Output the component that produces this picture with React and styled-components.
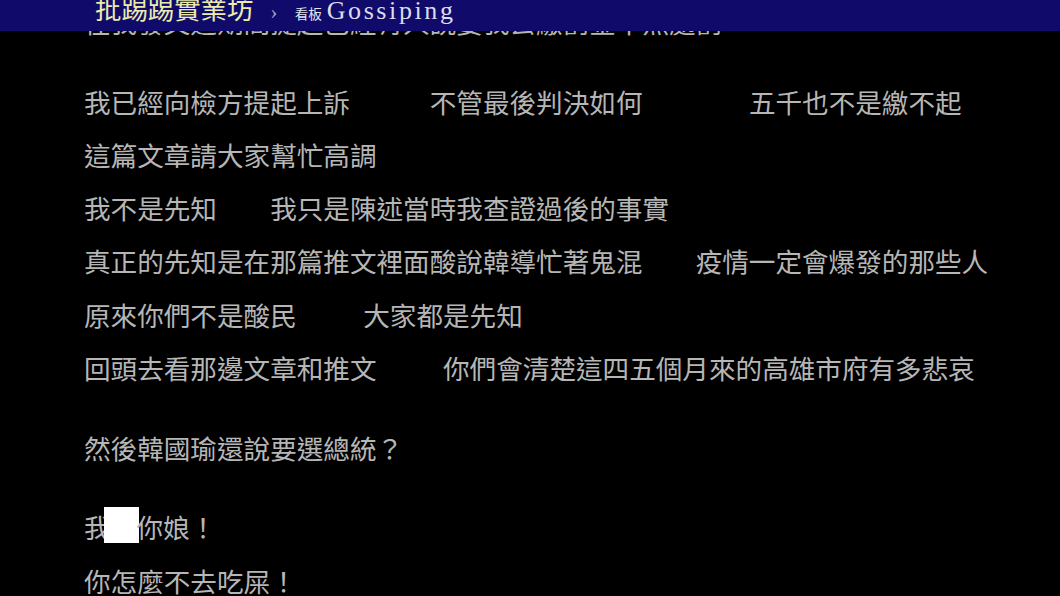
import styled, { createGlobalStyle } from 'styled-components';

const GlobalStyle = createGlobalStyle`
    html, body {
        margin: 0;
        padding: 0;
        background: #000000;
        overflow: hidden;
    }
    * {
        box-sizing: border-box;
    }
`;

// each line is a list of segments: strings are text, numbers are half-width spaces
const before = [
    ['在我發文這期間提起已經有人說要我去繳罰金不然處罰'],
    null,
    ['我已經向檢方提起上訴', 6, '不管最後判決如何', 8, '五千也不是繳不起'],
    ['這篇文章請大家幫忙高調'],
    ['我不是先知', 4, '我只是陳述當時我查證過後的事實'],
    ['真正的先知是在那篇推文裡面酸說韓導忙著鬼混', 4, '疫情一定會爆發的那些人'],
    ['原來你們不是酸民', 5, '大家都是先知'],
    ['回頭去看那邊文章和推文', 5, '你們會清楚這四五個月來的高雄市府有多悲哀'],
    null,
    ['然後韓國瑜還說要選總統？'],
    null,
];

function Segments({ parts }) {
    return parts.map((p, i) =>
        typeof p === 'number' ? <Space key={i} n={p} /> : <span key={i}>{p}</span>
    );
}

export default function App() {
    return (
        <Page>
            <GlobalStyle />
            <Topbar>
                <Logo>批踢踢實業坊</Logo>
                <Chevron>›</Chevron>
                <BoardLabel>看板</BoardLabel>
                <BoardName>Gossiping</BoardName>
            </Topbar>
            <Article>
                {before.map((line, i) =>
                    line === null ? <Blank key={i} /> : (
                        <Line key={i}>
                            <Segments parts={line} />
                        </Line>
                    )
                )}
                <Line>
                    <span>我</span>
                    <Redact />
                    <span>你娘！</span>
                </Line>
                <Line>你怎麼不去吃屎！</Line>
            </Article>
        </Page>
    );
}

const Page = styled.main`
    width: 1060px;
    height: 596px;
    overflow: hidden;
    background: #000000;
    position: relative;
`;

const Topbar = styled.header`
    position: absolute;
    top: 0;
    left: 0;
    right: 0;
    height: 31px;
    background: #100b6b;
    display: flex;
    align-items: baseline;
    padding-left: 95px;
    line-height: 16px;
    z-index: 2;
`;

const Logo = styled.span`
    font-family: "Noto Sans CJK TC", sans-serif;
    font-size: 26.4px;
    color: #ecebac;
    margin-right: 17px;
`;

const Chevron = styled.span`
    font-family: "Liberation Serif", serif;
    font-size: 22px;
    color: #a0a0c4;
    margin-right: 17px;
`;

const BoardLabel = styled.span`
    font-family: "Noto Sans CJK TC", sans-serif;
    font-size: 13.5px;
    color: #e4e4ee;
    margin-right: 5px;
`;

const BoardName = styled.span`
    font-family: "Liberation Serif", serif;
    font-size: 26px;
    letter-spacing: 2.6px;
    color: #dcdcec;
`;

const Article = styled.article`
    margin-top: -5px;
    padding-left: 84px;
    font-family: "Noto Sans CJK TC", sans-serif;
    font-size: 26.6px;
    color: #b6b6b6;
`;

const Line = styled.div`
    display: flex;
    align-items: center;
    height: 2em;
    white-space: pre;
`;

const Blank = styled.div`
    height: 1em;
`;

const Space = styled.span`
    display: inline-block;
    width: ${({ n }) => n * 0.5}em;
`;

const Redact = styled.span`
    display: inline-block;
    width: 35px;
    height: 36px;
    margin: -4px -2px 0 -7px;
    background: #ffffff;
`;
